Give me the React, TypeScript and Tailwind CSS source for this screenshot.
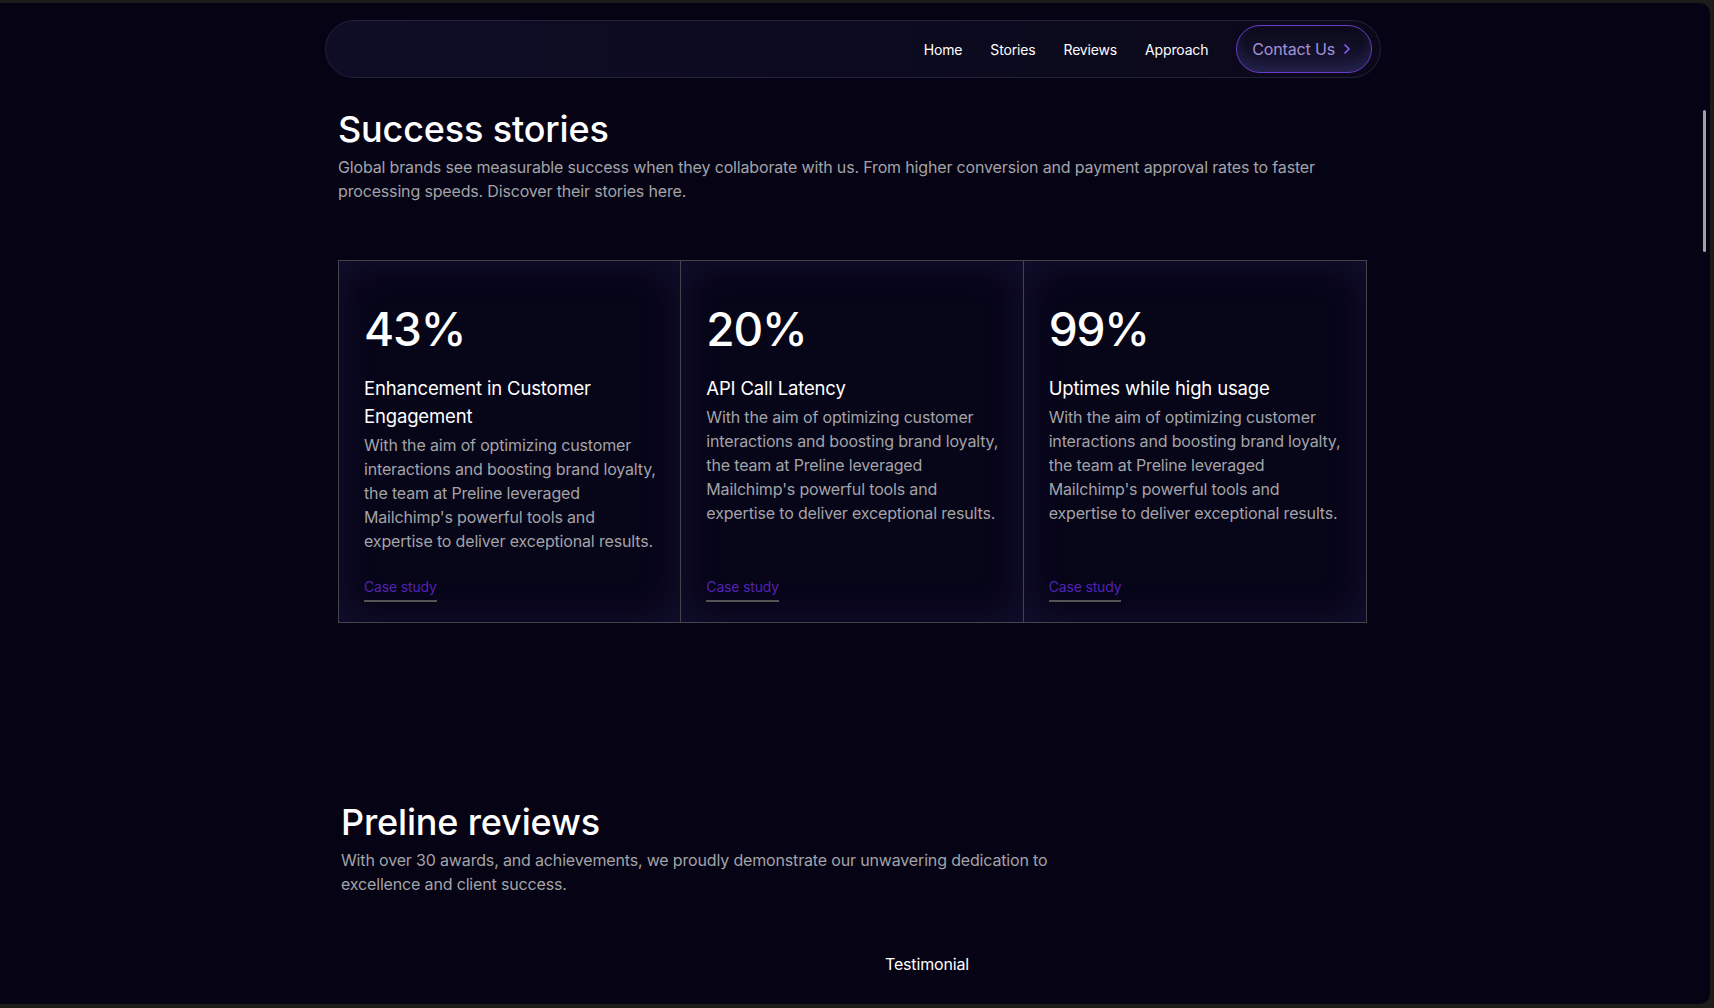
import { ChevronRight } from 'lucide-react';

const stats = [
  { value: '43%', title: 'Enhancement in Customer Engagement' },
  { value: '20%', title: 'API Call Latency' },
  { value: '99%', title: 'Uptimes while high usage' },
];

const body =
  "With the aim of optimizing customer interactions and boosting brand loyalty, the team at Preline leveraged Mailchimp's powerful tools and expertise to deliver exceptional results.";

export default function App() {
  const links = ['Home', 'Stories', 'Reviews', 'Approach'];

  return (
    <div className="h-screen w-full bg-[#1c1c1a] pt-[3px] pr-[4px] pb-[4px] font-['Inter',sans-serif] tracking-[-0.01em]">
      <div className="relative h-full overflow-hidden rounded-r-[10px] bg-[#050314]">
        {/* Navbar */}
        <nav className="ml-[calc(50%-530px)] mt-[17px] flex h-[58px] w-[1056px] items-center justify-end rounded-full border border-[#23213a] bg-gradient-to-r from-[#0f0d26] to-[#0a0819] pr-[8px]">
          <div className="flex items-center gap-[28px] text-[14px] text-white">
            {links.map((link) => (
              <a key={link} href="#" className="hover:text-[#a78bfa]">
                {link}
              </a>
            ))}
          </div>
          <a
            href="#"
            className="ml-[28px] flex h-[48px] items-center gap-[4px] rounded-full border border-[#6a3ccc] bg-gradient-to-b from-[#0b0919] to-[#1a1838] pl-[15px] pr-[16px] text-[16px] text-[#a192d6] shadow-[inset_0_-6px_12px_rgba(70,70,140,0.25)]"
          >
            Contact Us
            <ChevronRight size={16} strokeWidth={2.5} className="text-[#8b5cf6]" />
          </a>
        </nav>

        <main className="ml-[calc(50%-517px)] w-[1029px]">
          {/* Success stories */}
          <section className="mt-[31px]">
            <h2 className="text-4xl font-medium text-white">Success stories</h2>
            <p className="mt-[6px] text-base leading-6 text-[#a3a3a8]">
              Global brands see measurable success when they collaborate with us. From higher conversion and payment approval rates to faster processing speeds. Discover their stories here.
            </p>

            <div className="mt-[57px] grid grid-cols-3 divide-x divide-[#45444d] border border-[#45444d]">
              {stats.map((s) => (
                <div
                  key={s.value}
                  className="flex flex-col bg-[#070518] pl-[25px] pr-[15px] pt-[44px] pb-[20px] shadow-[inset_0_0_40px_rgba(55,45,120,0.28)]"
                >
                  <div className="text-[46px] leading-[48px] font-medium tracking-[-0.025em] text-white">{s.value}</div>
                  <h3 className="mt-[21px] text-[18.5px] leading-7 text-white">{s.title}</h3>
                  <p className="mt-[3px] text-base leading-6 text-[#a3a3a8]">{body}</p>
                  <div className="mt-auto pt-[21px]">
                    <a
                      href="#"
                      className="inline-block border-b-2 border-[#545454] pb-[3px] text-[14px] leading-5 text-[#5223b5]"
                    >
                      Case study
                    </a>
                  </div>
                </div>
              ))}
            </div>
          </section>

          {/* Reviews */}
          <section className="mt-[179px] pl-[3px]">
            <h2 className="text-4xl font-medium text-white">Preline reviews</h2>
            <p className="mt-[6px] max-w-[740px] text-base leading-6 text-[#a3a3a8]">
              With over 30 awards, and achievements, we proudly demonstrate our unwavering dedication to excellence and client success.
            </p>
            <div className="mt-[56px] pl-[544px] text-base leading-6 text-white">Testimonial</div>
          </section>
        </main>

        {/* scrollbar thumb */}
        <div className="absolute right-[4px] top-[107px] h-[142px] w-[3px] rounded-full bg-[#a1a1aa]" />
      </div>
    </div>
  );
}
